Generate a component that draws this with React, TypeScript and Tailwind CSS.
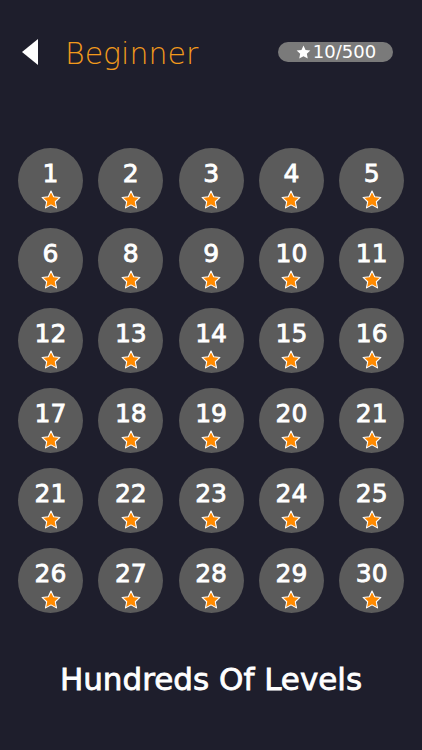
import React from 'react';

const levels = [1, 2, 3, 4, 5, 6, 8, 9, 10, 11, 12, 13, 14, 15, 16, 17, 18, 19, 20, 21, 21, 22, 23, 24, 25, 26, 27, 28, 29, 30];

const Star: React.FC<{ className?: string; fill: string; stroke?: string }> = ({ className, fill, stroke }) => (
  <svg viewBox="0 0 24 24" className={className}>
    <path
      d="M12 2.2l2.9 6.2 6.8.8-5 4.7 1.3 6.7L12 17.3l-6 3.3 1.3-6.7-5-4.7 6.8-.8z"
      fill={fill}
      stroke={stroke ?? 'none'}
      strokeWidth={1.2}
      strokeLinejoin="round"
    />
  </svg>
);

const LevelButton: React.FC<{ n: number }> = ({ n }) => (
  <div className="w-[65px] h-[65px] rounded-full bg-[#5b5b5b] flex flex-col items-center">
    <span className="mt-[13px] text-[25px] leading-[26px] text-white [-webkit-text-stroke:0.8px_white]">{n}</span>
    <Star className="w-[22px] h-[22px] mt-[2px]" fill="#ff8a00" stroke="#ffffff" />
  </div>
);

export default function App() {
  return (
    <div className="w-[422px] h-[750px] bg-[#1e1e2c] overflow-hidden" style={{ fontFamily: '"DejaVu Sans", "Noto Sans", sans-serif' }}>
      {/* header */}
      <div className="flex items-center h-[30px] mt-[37px] pl-[22px] pr-[29px]">
        <div className="w-0 h-0 border-t-[13px] border-b-[13px] border-r-[16px] border-t-transparent border-b-transparent border-r-white" />
        <span className="ml-[27px] mt-[3px] text-[30px] font-extralight text-[#f29a1c] leading-none">Beginner</span>
        <div className="ml-auto w-[115px] h-[20px] rounded-full bg-[#7a7a7a] flex items-center justify-center gap-[1px]">
          <Star className="w-[17px] h-[17px]" fill="#ffffff" />
          <span className="text-white text-[18px] leading-none">10/500</span>
        </div>
      </div>

      {/* level grid */}
      <div className="mt-[81px] px-[18px] grid grid-cols-5 gap-x-[15.5px] gap-y-[15px]">
        {levels.map((n, i) => (
          <LevelButton key={i} n={n} />
        ))}
      </div>

      <div className="mt-[48px] text-center text-white text-[31px] leading-[36px] [-webkit-text-stroke:0.8px_white]">
        Hundreds Of Levels
      </div>
    </div>
  );
}
